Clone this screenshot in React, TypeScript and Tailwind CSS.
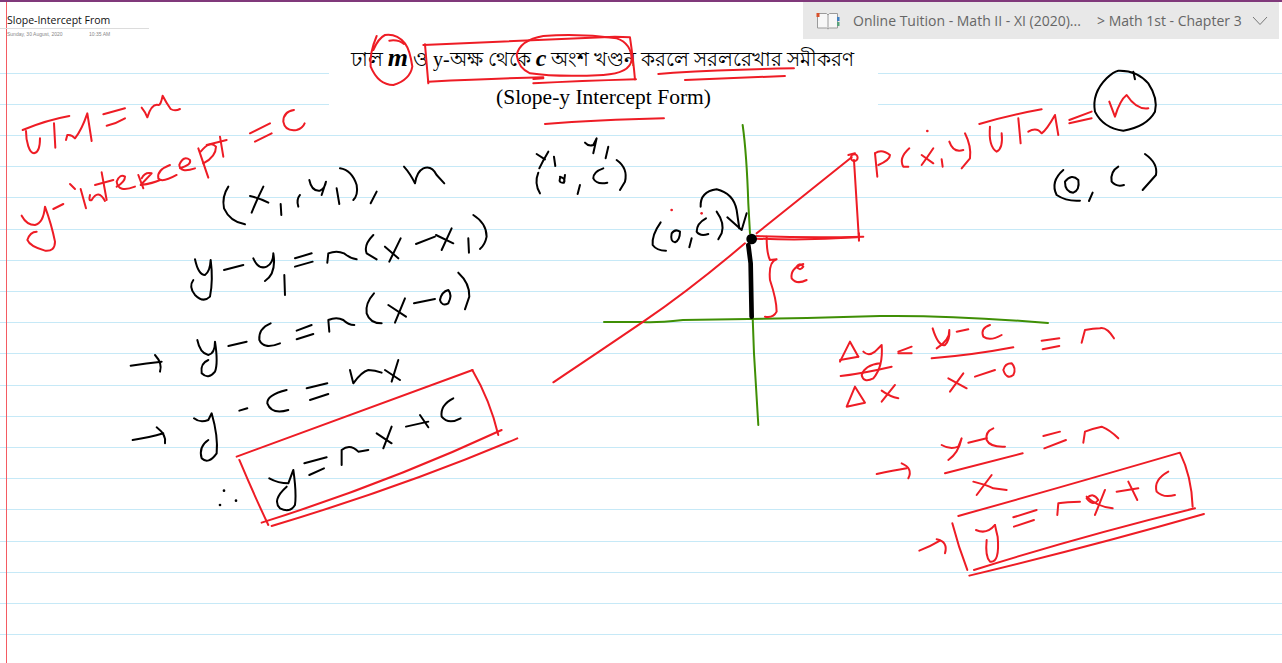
const RED = "#ee1c25";
const BLACK = "#000000";
const GREEN = "#3f8f05";

type Group = { x: number; y: number; red?: string[]; black?: string[]; green?: string[]; dots?: [number, number, string][] };

const groups: Group[] = [
  // left heading notes (zoom origin 10,85)
  {
    x: 10,
    y: 85,
    red: [
      "M38 135 Q110 105 178 93",
      "M48 138 C48 170 58 205 72 205 C88 203 90 180 90 160",
      "M132 115 L136 188",
      "M168 165 L172 150 Q185 148 195 160 Q215 135 232 85 L245 168",
      "M280 88 L345 70",
      "M290 122 Q320 115 345 100",
      "M395 68 Q405 80 412 97 Q425 55 445 60 Q452 62 458 32 Q470 55 482 72 Q495 80 510 72",
      "M852 75 Q820 80 820 110 Q825 140 860 135 Q878 130 884 115",
      "M720 145 L780 115",
      "M735 170 L785 145",
      "M35 392 Q50 420 75 420 Q100 415 105 365 Q125 420 135 470 Q135 500 105 497 Q60 485 52 465 Q60 440 80 440",
      "M130 372 L160 357",
      "M180 297 L195 312",
      "M212 312 L228 370",
      "M240 330 Q235 350 245 345 Q265 310 285 348",
      "M275 262 L290 345",
      "M255 300 L310 285",
      "M320 305 Q345 290 345 275 Q330 265 320 290 Q325 325 375 305",
      "M385 270 L400 310",
      "M395 280 Q405 260 425 265 L392 300 Q430 295 450 285",
      "M480 240 Q440 255 445 280 Q455 295 500 270",
      "M510 250 Q545 240 540 225 Q520 210 508 240 Q510 265 555 250",
      "M565 190 L595 278",
      "M572 200 Q600 165 618 185 Q618 215 580 235",
      "M630 155 L640 215",
      "M590 180 L650 165",
    ],
  },
  // (x1, y1), m and the point above the graph (zoom origin 210,130)
  {
    x: 210,
    y: 130,
    black: [
      "M55 170 Q35 200 42 235 Q60 275 105 283",
      "M120 198 Q150 205 175 218",
      "M160 170 Q140 210 125 248",
      "M212 222 L214 255",
      "M270 195 Q258 210 265 230",
      "M298 150 Q305 185 330 182 Q345 175 348 155 L335 195",
      "M380 175 L388 222",
      "M390 115 Q425 120 440 165 Q445 195 430 210",
      "M500 185 L482 220",
      "M582 110 Q600 130 615 160 Q620 125 640 115 Q665 105 680 135 L703 160",
      "M980 72 L1005 88",
      "M1015 65 Q1000 90 988 115",
      "M1032 80 L1036 108",
      "M985 128 Q972 160 990 190",
      "M1050 145 Q1045 160 1062 158 Q1068 145 1050 140 M1065 135 L1062 158",
      "M1110 165 L1103 192",
      "M1180 115 Q1150 125 1150 145 Q1160 165 1192 158",
      "M1220 90 Q1255 115 1245 155 L1230 180",
      "M1125 38 Q1135 50 1150 45 L1160 25 L1150 70",
      "M1195 50 L1187 85",
    ],
  },
  // derivation (zoom origin 120,200)
  {
    x: 120,
    y: 200,
    black: [
      "M225 178 Q235 225 255 225 Q270 215 272 180 Q280 240 270 290 Q250 310 225 285 Q205 260 220 240",
      "M312 210 L370 195",
      "M400 175 Q415 210 440 200 Q460 190 460 160 Q470 220 435 243",
      "M493 225 L495 285",
      "M525 175 L575 160",
      "M525 200 L578 185",
      "M622 188 L625 160 Q650 150 672 160 Q690 175 710 178",
      "M760 105 Q730 135 740 160 L770 178",
      "M795 140 L835 175",
      "M842 115 L808 185",
      "M888 132 L945 110",
      "M948 105 L1000 130",
      "M995 85 L965 150",
      "M1045 115 L1047 158",
      "M1060 45 Q1100 70 1100 110 Q1095 135 1080 147",
      "M32 497 Q80 490 125 485",
      "M105 465 Q128 490 120 515",
      "M232 420 Q240 460 265 465 Q285 460 285 425 Q295 490 285 515 Q265 540 245 520 Q240 490 265 480",
      "M325 438 L380 425",
      "M452 370 Q415 385 418 420 Q430 450 480 430",
      "M530 392 L575 375",
      "M530 418 L580 402",
      "M628 395 L625 360 Q650 350 670 360 Q685 375 703 375",
      "M762 280 Q735 310 740 340 Q750 370 785 370",
      "M805 315 L858 350",
      "M855 295 L825 368",
      "M882 310 L945 297",
      "M960 300 Q965 275 985 270 Q998 285 985 310 Q965 320 960 300",
      "M1015 218 Q1050 250 1048 290 L1035 328",
      "M690 510 L700 550 Q725 515 745 510 Q765 510 785 518",
      "M795 510 L840 540",
      "M835 480 L815 545",
      "M222 655 Q240 670 265 660 L275 640 Q295 710 290 760 Q265 795 245 775 Q235 740 265 720",
      "M358 632 L382 625",
      "M500 570 Q440 585 442 610 Q455 645 505 630",
      "M560 565 L622 550",
      "M570 600 L625 582",
      "M38 720 Q90 712 130 700",
      "M110 682 Q140 705 135 730",
      "M448 835 Q475 850 505 850 L520 810 Q530 880 525 915 Q510 940 480 925 Q455 900 500 860",
      "M553 790 L620 772",
      "M568 825 L612 805",
      "M665 795 L665 750 Q690 730 715 755 L745 750",
      "M770 700 L815 730",
      "M815 680 L790 745",
      "M858 680 L925 665",
      "M900 645 L925 682",
      "M1000 595 Q960 615 965 650 Q985 675 1022 655",
    ],
    red: [
      "M350 770 Q700 640 1058 510",
      "M1057 510 Q1110 600 1135 705",
      "M1145 690 Q800 850 425 968",
      "M358 780 Q400 880 445 975",
      "M1192 715 Q850 860 455 978",
    ],
    dots: [
      [312, 872, BLACK],
      [300, 915, BLACK],
      [348, 902, BLACK],
    ],
  },
  // graph (zoom origin 540,120)
  {
    x: 540,
    y: 120,
    green: ["M608 15 Q620 100 625 250 L630 340", "M638 590 L642 700 L655 915"],
    red: [
      "M40 787 Q200 680 310 605 Q450 510 615 370",
      "M650 340 L935 112",
      "M925 105 L945 100",
      "M942 120 L957 360",
      "M650 348 Q800 354 970 350",
      "M650 356 Q800 362 950 352",
      "M680 350 Q680 400 690 420 L710 418 Q685 425 690 480 Q710 540 710 575 Q700 595 675 590",
      "M790 432 Q750 445 755 475 Q770 495 800 480",
      "M770 440 Q780 425 790 440 Q780 455 770 440",
      "M957 340 L957 362",
      "M933 113 A10 10 0 1 0 953 113 A10 10 0 1 0 933 113",
    ],
    black: [
      "M362 307 Q335 345 338 375 Q350 392 378 392",
      "M395 340 Q390 365 405 367 Q420 360 420 335 Q405 325 395 340",
      "M455 355 L448 382",
      "M498 295 Q470 310 470 335 Q480 350 505 342",
      "M530 275 Q555 310 545 340 L535 358",
      "M482 260 Q480 215 530 208 Q580 220 590 270 L598 325",
      "M562 292 L605 330 L620 280",
    ],
    dots: [
      [395, 270, RED],
      [485, 280, RED],
    ],
  },
  // right-hand working (zoom origin 830,310)
  {
    x: 830,
    y: 310,
    red: [
      "M30 155 L60 95 L85 140",
      "M30 150 L85 140",
      "M100 125 Q115 140 135 125 L155 105 Q160 170 130 205 Q100 220 95 195 Q105 165 150 160",
      "M32 198 Q100 190 185 170",
      "M50 290 L75 230 L105 278 Z",
      "M155 242 Q180 260 205 265",
      "M195 225 Q175 250 155 275",
      "M205 125 Q225 118 245 110",
      "M205 130 L245 130",
      "M308 55 Q325 110 345 105 Q360 90 358 60 Q360 90 320 115",
      "M380 65 L415 58",
      "M480 45 Q450 55 460 80 Q480 95 515 75",
      "M305 145 Q430 135 550 112",
      "M355 205 L410 235",
      "M400 190 L360 245",
      "M435 200 L495 180",
      "M520 180 Q525 160 545 160 Q560 175 550 195 Q530 210 520 180",
      "M635 92 L688 85",
      "M638 118 L688 108",
      "M755 98 L765 60 Q790 55 810 55 Q830 50 852 85",
      "M140 492 Q190 482 230 475",
      "M215 460 Q250 475 235 505",
      "M335 405 Q360 420 385 410 L395 385 Q385 430 355 450",
      "M415 398 L470 385",
      "M490 355 Q465 365 470 390 Q480 412 525 410",
      "M345 490 L578 430",
      "M430 515 Q470 525 490 535 L530 540",
      "M485 495 L440 555",
      "M640 378 L690 365",
      "M643 415 L708 390",
      "M760 398 L765 365 Q790 355 815 350 Q840 360 865 385",
      "M385 618 Q700 530 1050 428 Q1085 500 1088 590",
      "M367 640 Q385 710 412 780",
      "M1095 595 Q750 680 432 780",
      "M1122 612 Q780 710 418 797",
      "M438 660 Q470 675 495 645",
      "M470 690 Q465 740 480 755 Q510 760 503 680 Q498 660 495 645",
      "M550 622 L620 600",
      "M552 650 L612 630",
      "M682 615 L685 580 Q710 575 750 575",
      "M770 560 Q800 590 848 595",
      "M825 540 L795 615",
      "M770 565 Q790 545 805 570 Q790 590 770 565",
      "M860 545 L925 535",
      "M895 515 L922 570",
      "M1015 485 Q970 510 980 545 Q1000 565 1035 555",
      "M268 722 Q300 710 330 692",
      "M320 688 Q355 695 345 730",
    ],
  },
  // right top (zoom origin 790,0)
  {
    x: 790,
    y: 0,
    red: [
      "M255 460 L262 530",
      "M255 460 Q275 445 300 465 Q300 480 265 495",
      "M358 445 Q325 475 340 500 L355 500",
      "M395 465 L430 490",
      "M430 445 Q410 475 395 495",
      "M455 478 L458 500",
      "M478 425 Q490 460 520 450",
      "M525 400 Q545 440 540 475 L515 505",
      "M568 372 Q660 345 755 328",
      "M600 380 Q595 440 620 455 Q640 445 635 400",
      "M685 355 L692 430",
      "M715 395 Q740 380 755 400 Q770 390 795 345 L805 405",
      "M838 360 L905 335",
      "M838 370 L905 355",
      "M958 305 L975 350 Q990 300 1010 285 Q1040 330 1075 325",
    ],
    black: [
      "M985 212 Q1040 210 1075 250 Q1105 295 1095 335 Q1070 380 1000 392 Q940 385 915 335 Q905 280 950 235 Q970 215 985 212",
      "M1030 215 L1035 238",
      "M820 510 Q780 545 800 585 Q830 605 870 602",
      "M825 545 Q825 575 850 578 Q870 570 865 540 Q845 520 825 545",
      "M908 578 L897 603",
      "M985 500 Q960 515 965 545 Q980 562 1002 555",
      "M1065 462 Q1105 490 1098 525 L1058 570",
    ],
    dots: [[412, 393, RED]],
  },
  // annotations on the heading (zoom origin 330,0)
  {
    x: 330,
    y: 0,
    red: [
      "M130 150 Q145 115 165 105 Q200 100 225 130 Q240 150 247 200 Q240 240 190 255 Q145 255 122 200 Q118 160 140 108",
      "M178 122 Q205 118 222 132",
      "M280 135 Q500 125 855 110 L900 112 Q910 180 915 238",
      "M285 133 L295 250",
      "M295 245 Q500 235 640 232",
      "M610 250 Q750 243 918 238",
      "M610 237 L640 235",
      "M560 165 Q570 120 640 108 Q750 100 860 115 Q905 130 905 180 Q900 220 820 225 Q680 232 600 220 Q565 205 560 165",
      "M985 222 L1030 218 Q1200 208 1392 205",
      "M1065 240 Q1200 235 1365 228",
      "M645 372 Q800 360 1002 355",
    ],
  },
];

const ruleYs = [73, 104, 135, 166, 197, 229, 260, 291, 322, 353, 385, 416, 447, 478, 509, 541, 572, 603, 634];

function Ink({ d, color, width = 6 }: { d: string; color: string; width?: number }) {
  return <path d={d} fill="none" stroke={color} strokeWidth={width} strokeLinecap="round" strokeLinejoin="round" />;
}

function NotebookIcon() {
  return (
    <svg width="24" height="18" viewBox="0 0 24 18" className="shrink-0">
      <path d="M1.5 1.5 H10.5 L12 3 L13.5 1.5 H21.5 V16 H13.5 L12 17 L10.5 16 H1.5 Z" fill="#f7f7f7" stroke="#9a9a9a" strokeWidth="1" />
      <path d="M12 3 V16.5" stroke="#9a9a9a" strokeWidth="1" />
      <rect x="0.5" y="1" width="3" height="4" fill="#d8502b" />
      <rect x="21" y="5" width="2.5" height="4" fill="#3f7fc1" />
      <rect x="21" y="10" width="2.5" height="4" fill="#58a27c" />
    </svg>
  );
}

export default function App() {
  return (
    <div className="relative h-[663px] w-[1282px] overflow-hidden border-t-2 border-[#80397b] bg-white font-['Open_Sans',sans-serif]">
      {/* ruled paper */}
      <svg className="absolute left-0 top-[-2px]" width="1282" height="663">
        {ruleYs.map((y) => (
          <line key={y} x1="0" x2="1282" y1={y + 0.5} y2={y + 0.5} stroke="#c6e9f7" strokeWidth="1" />
        ))}
        <line x1="6.5" x2="6.5" y1="2" y2="663" stroke="#f45b62" strokeWidth="1" />
      </svg>

      {/* heading picture pasted on the page */}
      <div className="absolute left-[329px] top-[38px] flex h-[80px] w-[549px] flex-col items-center bg-white font-['Liberation_Serif',serif] text-black">
        <p className="ml-[-2px] mt-[4px] whitespace-nowrap text-[20px] leading-[28px]">
          ঢাল <b className="text-[26px] italic leading-[28px]">m</b> ও y-অক্ষ থেকে <b className="text-[24px] italic leading-[28px]">c</b> অংশ খণ্ডন করলে সরলরেখার সমীকরণ
        </p>
        <p className="mt-[10px] whitespace-nowrap text-[21.5px] leading-[28px]">(Slope-y Intercept Form)</p>
      </div>

      {/* top row: note title and section breadcrumb */}
      <div className="relative flex items-start justify-between pr-[3px]">
        <div className="w-[149px] pt-[11px]">
          <div className="border-b border-[#dcdcdc] pl-[7px] text-[10.5px] leading-[15px] text-[#111]">Slope-Intercept From</div>
          <div className="flex pl-[7px] pt-[2px] font-['Liberation_Sans',sans-serif] text-[5px] leading-[7px] text-[#888]">
            <span className="w-[82px]">Sunday, 30 August, 2020</span>
            <span>10:35 AM</span>
          </div>
        </div>
        <div className="flex h-[37px] w-[476px] items-center bg-[#e8e8e8] pl-[13px] text-[14px] text-[#666]">
          <NotebookIcon />
          <span className="ml-[13px] w-[244px] whitespace-nowrap">Online Tuition - Math II - XI (2020)...</span>
          <span className="whitespace-nowrap">&gt; Math 1st - Chapter 3</span>
          <svg width="16" height="10" viewBox="0 0 16 10" className="ml-[10px]">
            <path d="M1 1 L8 8.5 L15 1" fill="none" stroke="#777" strokeWidth="1" />
          </svg>
        </div>
      </div>

      {/* handwriting */}
      <svg className="pointer-events-none absolute left-0 top-[-2px]" width="1282" height="663">
        <path d="M604 322 L643 322 Q655 323 683 320 Q740 319 807 318 L880 316 Q950 315 1048 323" fill="none" stroke={GREEN} strokeWidth="2" strokeLinecap="round" />
        {groups.map((g, i) => (
          <g key={i} transform={`translate(${g.x} ${g.y}) scale(0.3333)`}>
            {g.green?.map((d, j) => <Ink key={`g${j}`} d={d} color={GREEN} />)}
            {g.red?.map((d, j) => <Ink key={`r${j}`} d={d} color={RED} />)}
            {g.black?.map((d, j) => <Ink key={`b${j}`} d={d} color={BLACK} />)}
            {g.dots?.map(([x, y, c], j) => <circle key={`d${j}`} cx={x} cy={y} r="4" fill={c} />)}
          </g>
        ))}
        {/* thick black mark on the y-axis */}
        <g transform="translate(540 120) scale(0.3333)">
          <circle cx="635" cy="357" r="16" fill={BLACK} />
          <path d="M625 375 L632 430 L635 590" fill="none" stroke={BLACK} strokeWidth="14" strokeLinecap="round" />
        </g>
      </svg>
    </div>
  );
}
